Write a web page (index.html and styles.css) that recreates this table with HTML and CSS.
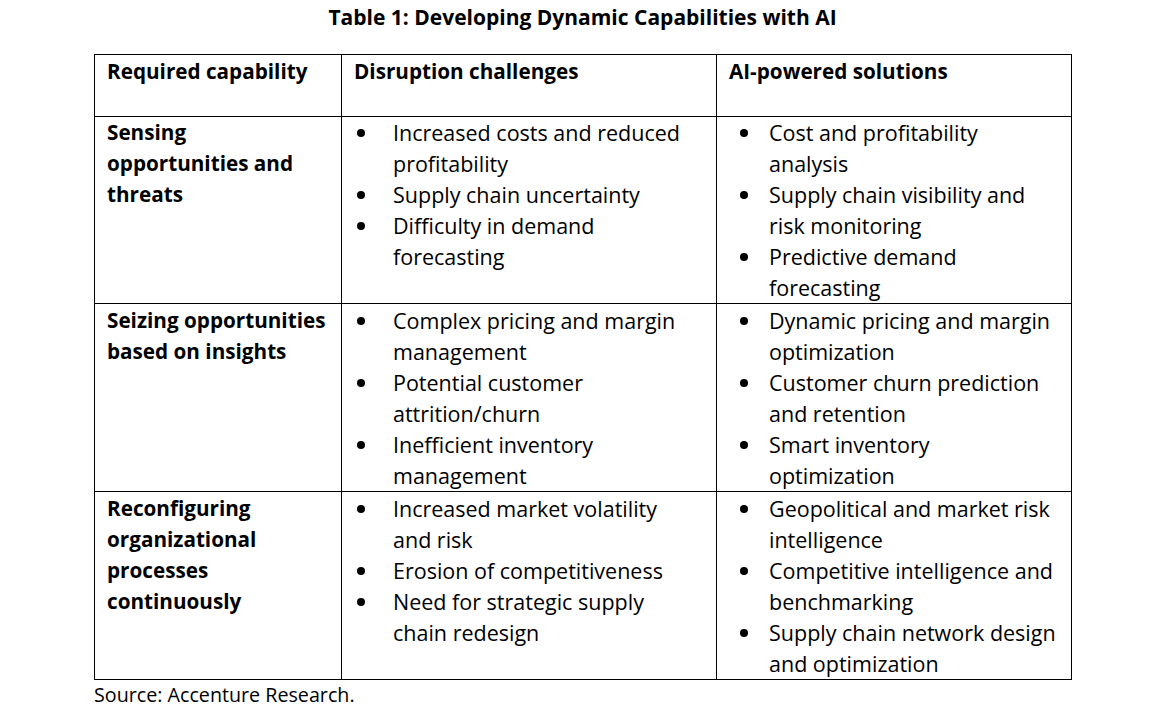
FILE: index.html
```html
<!DOCTYPE html>
<html lang="en">
<head>
<meta charset="utf-8">
<title>Table 1: Developing Dynamic Capabilities with AI</title>
<link rel="stylesheet" href="styles.css">
</head>
<body>
<div class="page">
  <h1 class="title">Table 1: Developing Dynamic Capabilities with AI</h1>
  <table class="cap-table">
    <colgroup>
      <col class="c1">
      <col class="c2">
      <col class="c3">
    </colgroup>
    <thead>
      <tr class="head-row">
        <th>Required capability</th>
        <th>Disruption challenges</th>
        <th>AI-powered solutions</th>
      </tr>
    </thead>
    <tbody>
      <tr class="body-row r1">
        <th>Sensing<br>opportunities and<br>threats</th>
        <td>
          <ul class="list list-a">
            <li>Increased costs and reduced<br>profitability</li>
            <li>Supply chain uncertainty</li>
            <li>Difficulty in demand<br>forecasting</li>
          </ul>
        </td>
        <td>
          <ul class="list list-b">
            <li>Cost and profitability<br>analysis</li>
            <li>Supply chain visibility and<br>risk monitoring</li>
            <li>Predictive demand<br>forecasting</li>
          </ul>
        </td>
      </tr>
      <tr class="body-row r2">
        <th>Seizing opportunities<br>based on insights</th>
        <td>
          <ul class="list list-a">
            <li>Complex pricing and margin<br>management</li>
            <li>Potential customer<br>attrition/churn</li>
            <li>Inefficient inventory<br>management</li>
          </ul>
        </td>
        <td>
          <ul class="list list-b">
            <li>Dynamic pricing and margin<br>optimization</li>
            <li>Customer churn prediction<br>and retention</li>
            <li>Smart inventory<br>optimization</li>
          </ul>
        </td>
      </tr>
      <tr class="body-row r3">
        <th>Reconfiguring<br>organizational<br>processes<br>continuously</th>
        <td>
          <ul class="list list-a">
            <li>Increased market volatility<br>and risk</li>
            <li>Erosion of competitiveness</li>
            <li>Need for strategic supply<br>chain redesign</li>
          </ul>
        </td>
        <td>
          <ul class="list list-b">
            <li>Geopolitical and market risk<br>intelligence</li>
            <li>Competitive intelligence and<br>benchmarking</li>
            <li>Supply chain network design<br>and optimization</li>
          </ul>
        </td>
      </tr>
    </tbody>
  </table>
  <p class="source">Source: Accenture Research.</p>
</div>
</body>
</html>
```

FILE: styles.css
```css
html, body {
  margin: 0;
  padding: 0;
  background: #ffffff;
}

body {
  font-family: "Open Sans", "Liberation Sans", sans-serif;
  color: #000000;
  font-size: 21.5px;
  line-height: 31px;
}

.page {
  width: 1156px;
  height: 712px;
  padding-left: 94px;
  box-sizing: border-box;
}

.title {
  margin: 0;
  padding-top: 2px;
  width: 977px;
  text-align: center;
  font-size: 21px;
  font-weight: 700;
  line-height: 31px;
  height: 54px;
  box-sizing: border-box;
}

.cap-table {
  border-collapse: collapse;
  table-layout: fixed;
  width: 977px;
}

.c1 { width: 247px; }
.c2 { width: 375px; }
.c3 { width: 355px; }

.cap-table th,
.cap-table td {
  border: 1px solid #000000;
  vertical-align: top;
  text-align: left;
  padding: 1px 0 0 12px;
  white-space: nowrap;
}

.cap-table th {
  font-weight: 700;
  font-size: 20.7px;
}

.head-row th {
  height: 62px;
  box-sizing: border-box;
}

.body-row th,
.body-row td {
  height: 188px;
  box-sizing: border-box;
}

.body-row.r1 th,
.body-row.r1 td {
  height: 187px;
  padding-top: 0;
}

.list {
  margin: 0;
  padding: 0;
  list-style: none;
}

.list li {
  position: relative;
}

.list li::before {
  content: "";
  position: absolute;
  top: 12px;
  width: 8px;
  height: 8px;
  border-radius: 50%;
  background: #000000;
}

.list-a li {
  padding-left: 39px;
}

.list-a li::before {
  left: 3px;
}

.list-b li {
  padding-left: 40px;
}

.list-b li::before {
  left: 11px;
}

.source {
  margin: 0;
  font-size: 19.7px;
  line-height: 29px;
  padding-top: 0;
}
```
